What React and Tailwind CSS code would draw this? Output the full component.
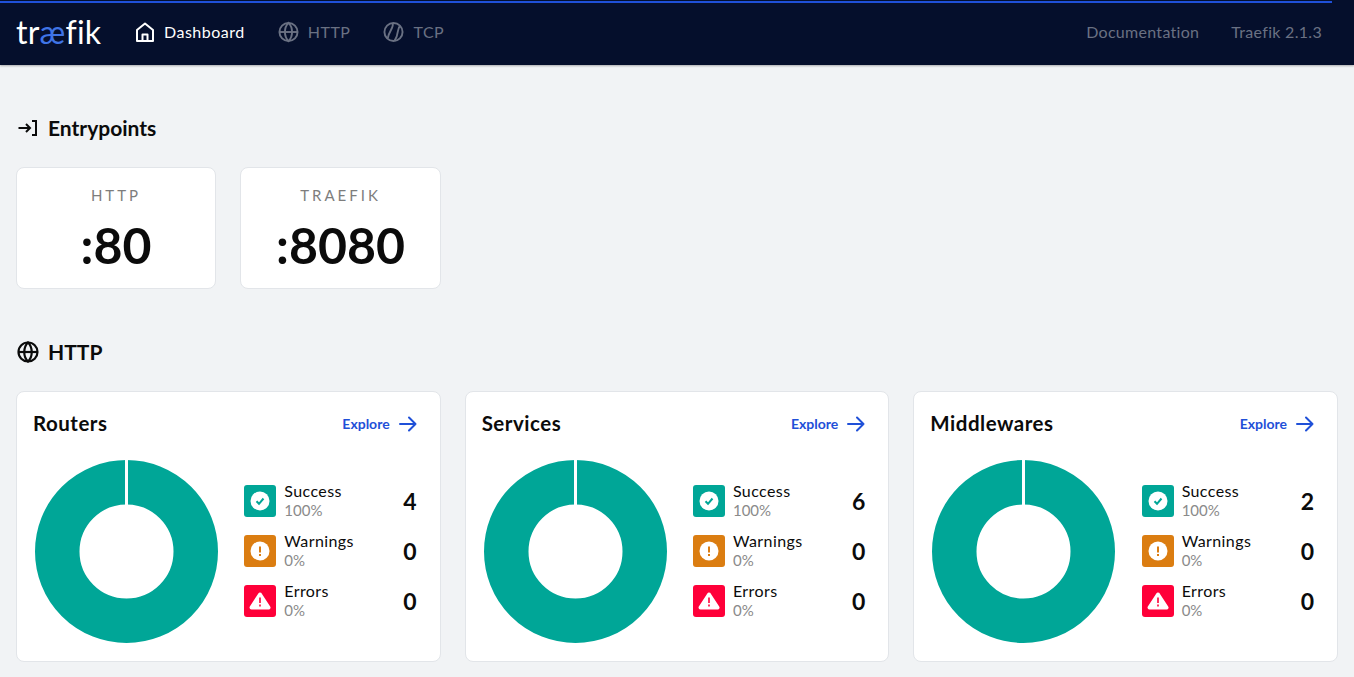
import React from "react";

function Logo() {
  return (
    <div className="w-[86px] h-[32px] text-[32px] leading-[32px] font-normal text-white flex items-center font-['Lato',sans-serif] tracking-[0.2px]">
      <span>tr</span><span className="text-[#3f74e6]">æ</span><span>fik</span>
    </div>
  );
}

const HomeIcon = () => (
  <svg width="20" height="20" viewBox="0 0 20 20" fill="none" stroke="currentColor" strokeWidth="2" strokeLinejoin="round">
    <path d="M2 8 10 1.500 18 8V19H2Z" />
    <path d="M7.500 19V12.500H12.500V19" />
  </svg>
);
const GlobeIcon = ({ size = 22, sw = 2 }) => (
  <svg width={size} height={size} viewBox="0 0 22 22" fill="none" stroke="currentColor" strokeWidth={sw}>
    <circle cx="11" cy="11" r="9.500" />
    <path d="M1.500 11H20.500" />
    <path d="M11 1.500C6 6.500 6 15.500 11 20.500C16 15.500 16 6.500 11 1.500Z" />
  </svg>
);
const BallIcon = () => (
  <svg width="22" height="22" viewBox="0 0 22 22" fill="none" stroke="currentColor" strokeWidth="2">
    <circle cx="11" cy="11" r="9.500" />
    <path d="M10 1.500C12 6 6.500 9 5 17.500" />
    <path d="M18 4.500C14 8 17.500 12 12 20.500" />
  </svg>
);
const EntryIcon = () => (
  <svg width="20" height="18" viewBox="0 0 20 18" fill="none" stroke="currentColor" strokeWidth="2">
    <path d="M1.500 9H12.500M9 5l4 4-4 4" />
    <path d="M15 2H19V16H15" />
  </svg>
);
const ArrowIcon = () => (
  <svg width="18" height="16" viewBox="0 0 18 16" fill="none" stroke="currentColor" strokeWidth="2" strokeLinecap="round" strokeLinejoin="round">
    <path d="M1 8H16.500M10 1.500 16.500 8 10 14.500" />
  </svg>
);

const CheckBadge = () => (
  <svg width="20" height="20" viewBox="0 0 20 20">
    <circle cx="10" cy="10" r="9.500" fill="#fff" />
    <path d="M6.500 10.300 9 12.800 13.500 7.500" fill="none" stroke="#00a697" strokeWidth="2" />
  </svg>
);
const WarnBadge = () => (
  <svg width="20" height="20" viewBox="0 0 20 20">
    <circle cx="10" cy="10" r="9.500" fill="#fff" />
    <path d="M10 5.500V11.500M10 13V15" stroke="#db7d11" strokeWidth="2" />
  </svg>
);
const ErrorBadge = () => (
  <svg width="22" height="20" viewBox="0 0 22 20">
    <path d="M11 3.500 19.500 16.500H2.500Z" fill="#fff" stroke="#fff" strokeWidth="4" strokeLinejoin="round" />
    <path d="M11 6.500V12M11 13.500V15.500" stroke="#ff0039" strokeWidth="1.600" />
  </svg>
);

function Donut() {
  return (
    <svg width="183" height="183" viewBox="0 0 183 183" className="shrink-0">
      <circle cx="91.500" cy="91.500" r="69.250" fill="none" stroke="#00a697" strokeWidth="44.500" />
      <rect x="90" y="0" width="3" height="45" fill="#fff" />
    </svg>
  );
}

function StatRow({ color, Icon, label, pct, value }) {
  return (
    <div className="flex items-center h-[32px]">
      <div className={`w-8 h-8 rounded-[3px] flex items-center justify-center shrink-0 ${color}`}>
        <Icon />
      </div>
      <div className="ml-2 flex-1 flex flex-col">
        <div className="text-[16px] leading-[18px] text-[#0b0b0b] tracking-[0.4px]">{label}</div>
        <div className="text-[15px] leading-[21px] text-[#8a8a8a]">{pct}</div>
      </div>
      <div className="text-[23px] leading-none font-bold text-[#0b0b0b]">{value}</div>
    </div>
  );
}

function PanelCard({ title, success }) {
  return (
    <div className="bg-white border border-[#e2e5e9] rounded-lg h-[270.500px] pl-4 pr-[23px] pt-[15px]">
      <div className="flex items-center justify-between h-[33px]">
        <div className="text-[20.500px] leading-none font-bold text-[#0b0b0b] tracking-[0.5px]">{title}</div>
        <a className="flex items-center gap-[9px] text-[14px] font-bold text-[#1f50d8]">
          Explore <ArrowIcon />
        </a>
      </div>
      <div className="flex items-center mt-[20px]">
        <div className="ml-[2px] flex">
          <Donut />
        </div>
        <div className="ml-[26.300px] mb-[1px] flex-1 flex flex-col gap-[18px]">
          <StatRow color="bg-[#00a697]" Icon={CheckBadge} label="Success" pct="100%" value={success} />
          <StatRow color="bg-[#db7d11]" Icon={WarnBadge} label="Warnings" pct="0%" value="0" />
          <StatRow color="bg-[#ff0039]" Icon={ErrorBadge} label="Errors" pct="0%" value="0" />
        </div>
      </div>
    </div>
  );
}

function EntryCard({ name, port }) {
  return (
    <div className="h-[122px] bg-white border border-[#e2e5e9] rounded-lg flex flex-col items-center pt-[17px]">
      <div className="text-[15px] leading-[20px] tracking-[3px] text-[#7d7d7d]">{name}</div>
      <div className="text-[50px] leading-[60px] mt-[10px] font-bold text-[#0b0b0b]">{port}</div>
    </div>
  );
}

function SectionTitle({ icon, children }) {
  return (
    <div className="flex items-center h-8 text-[#0b0b0b]">
      <div className="w-[22px] flex justify-start ml-[1px]">{icon}</div>
      <div className="ml-[9px] pb-[2px] text-[21px] leading-none font-bold">{children}</div>
    </div>
  );
}

function NavItem({ icon, label, active }) {
  return (
    <div className={`flex items-center gap-[9px] text-[16px] tracking-[0.5px] ${active ? "text-white" : "text-[#6a7183]"}`}>
      <span className="w-[21px] flex justify-center">{icon}</span>
      {label}
    </div>
  );
}

export default function App() {
  return (
    <div className="h-[677px] overflow-hidden bg-[#f1f3f5] font-['Lato',sans-serif]">
      <header className="relative h-[65px] bg-[#050f2c] flex items-center justify-between pl-4 pr-8 pb-[1px] shadow-[0_1px_2px_rgba(0,0,0,0.3)]">
        <div className="absolute left-0 top-[1px] h-[2px] w-[1332px] bg-[#1f50d8]" />
        <div className="flex items-center">
          <Logo />
          <div className="flex items-center gap-[33px] ml-[32px]">
            <NavItem active icon={<HomeIcon />} label="Dashboard" />
            <NavItem icon={<GlobeIcon />} label="HTTP" />
            <NavItem icon={<BallIcon />} label="TCP" />
          </div>
        </div>
        <div className="flex items-center gap-[32px] text-[16px] tracking-[0.3px] text-[#6a7183]">
          <span>Documentation</span>
          <span>Traefik 2.1.3</span>
        </div>
      </header>
      <main className="px-4">
        <div className="pt-[47px]">
          <SectionTitle icon={<EntryIcon />}>Entrypoints</SectionTitle>
        </div>
        <div className="grid grid-cols-[200px_201px] gap-[24px] mt-[23px]">
          <EntryCard name="HTTP" port=":80" />
          <EntryCard name="TRAEFIK" port=":8080" />
        </div>
        <div className="mt-[47px]">
          <SectionTitle icon={<GlobeIcon sw={2.200} />}>HTTP</SectionTitle>
        </div>
        <div className="grid grid-cols-3 gap-[24px] mt-[23px]">
          <PanelCard title="Routers" success="4" />
          <PanelCard title="Services" success="6" />
          <PanelCard title="Middlewares" success="2" />
        </div>
      </main>
    </div>
  );
}
